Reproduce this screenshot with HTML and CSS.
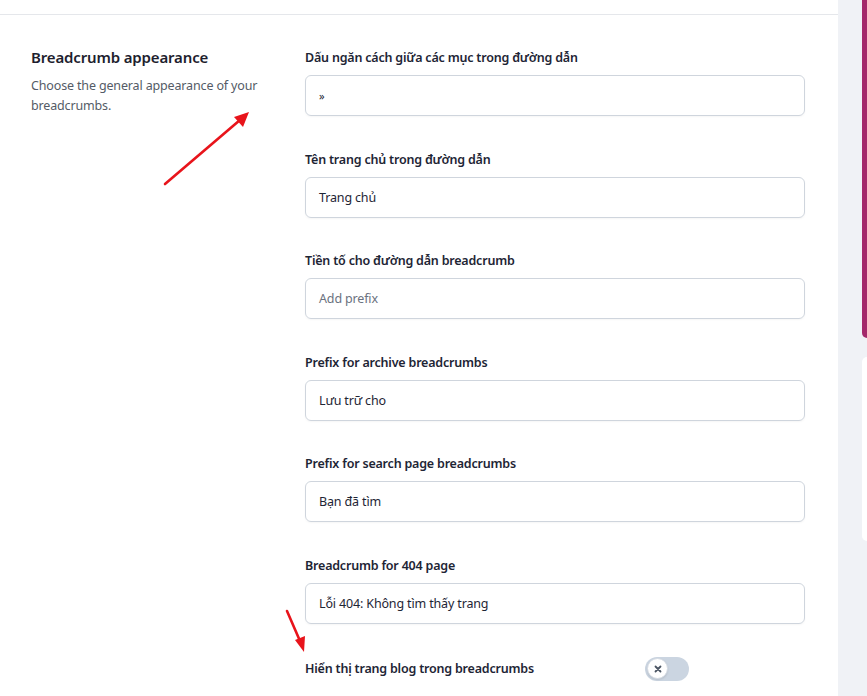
FILE: index.html
```html
<!DOCTYPE html>
<html lang="vi">
<head>
<meta charset="utf-8">
<title>Breadcrumb appearance</title>
<link rel="stylesheet" href="styles.css">
</head>
<body>
<div class="page">
  <main class="main">
    <div class="topbar"></div>
    <section class="section">
      <div class="intro">
        <h2 class="title">Breadcrumb appearance</h2>
        <p class="desc">Choose the general appearance of your breadcrumbs.</p>
      </div>
      <div class="fields">
        <div class="field">
          <label class="label">Dấu ngăn cách giữa các mục trong đường dẫn</label>
          <div class="input small">»</div>
        </div>
        <div class="field">
          <label class="label">Tên trang chủ trong đường dẫn</label>
          <div class="input">Trang chủ</div>
        </div>
        <div class="field">
          <label class="label">Tiền tố cho đường dẫn breadcrumb</label>
          <div class="input placeholder">Add prefix</div>
        </div>
        <div class="field">
          <label class="label">Prefix for archive breadcrumbs</label>
          <div class="input">Lưu trữ cho</div>
        </div>
        <div class="field">
          <label class="label">Prefix for search page breadcrumbs</label>
          <div class="input">Bạn đã tìm</div>
        </div>
        <div class="field">
          <label class="label">Breadcrumb for 404 page</label>
          <div class="input">Lỗi 404: Không tìm thấy trang</div>
        </div>
        <div class="toggle-row">
          <span class="label">Hiển thị trang blog trong breadcrumbs</span>
          <span class="toggle"><span class="knob">
            <svg width="10" height="10" viewBox="0 0 10 10"><path d="M2.5 2.5 L7.5 7.5 M7.5 2.5 L2.5 7.5" stroke="#4b5563" stroke-width="1.8" stroke-linecap="round"/></svg>
          </span></span>
        </div>
      </div>
    </section>
    <svg class="arrow arrow-1" width="100" height="90" viewBox="0 0 100 90">
      <line x1="5" y1="80" x2="80" y2="16" stroke="#e8141b" stroke-width="2.6" stroke-linecap="round"/>
      <polygon points="89,8 74,13 83,23" fill="#e8141b"/>
    </svg>
    <svg class="arrow arrow-2" width="40" height="50" viewBox="0 0 40 50">
      <line x1="6" y1="4" x2="19" y2="34" stroke="#e8141b" stroke-width="2.6" stroke-linecap="round"/>
      <polygon points="23,45 14,33 24,29" fill="#e8141b"/>
    </svg>
  </main>
  <aside class="aside">
    <div class="promo"></div>
    <div class="card"></div>
  </aside>
</div>
</body>
</html>
```

FILE: styles.css
```css
* { box-sizing: border-box; }
html, body { margin: 0; padding: 0; }
body {
  font-family: "Noto Sans", "Open Sans", sans-serif;
  color: #1e293b;
  background: #f0f2f6;
  overflow: hidden;
}
.page {
  display: flex;
  width: 867px;
  height: 696px;
}
.main {
  position: relative;
  width: 838px;
  flex: none;
  background: #fff;
}
.topbar {
  height: 15px;
  border-bottom: 1px solid #e5e7eb;
}
.section {
  display: grid;
  grid-template-columns: 274px 500px;
  padding: 32px 0 0 31px;
}
.title {
  margin: 0;
  font-size: 15px;
  font-weight: 600;
  line-height: 21px;
  letter-spacing: -0.15px;
  color: #1e1e2e;
}
.desc {
  margin: 8px 0 0;
  width: 236px;
  font-size: 12.5px;
  letter-spacing: -0.15px;
  line-height: 20px;
  color: #545b66;
}
.fields {
  display: flex;
  flex-direction: column;
  gap: 32.6px;
}
.field {
  display: flex;
  flex-direction: column;
  gap: 6px;
}
.label {
  font-size: 12.5px;
  font-weight: 600;
  line-height: 22px;
  letter-spacing: -0.2px;
  color: #1e2535;
}
.input {
  height: 41px;
  border: 1px solid #cfd5dd;
  border-radius: 6px;
  padding: 0 13px;
  display: flex;
  align-items: center;
  font-size: 12.5px;
  letter-spacing: -0.15px;
  color: #1e2535;
  box-shadow: 0 1px 2px rgba(0,0,0,0.04);
}
.input.small { font-size: 11px; }
.input.placeholder { color: #6b7280; }
.toggle-row {
  width: 384px;
  display: flex;
  align-items: center;
  justify-content: space-between;
}
.toggle {
  width: 44px;
  height: 24px;
  border-radius: 12px;
  background: #cbd5e1;
  display: flex;
  align-items: center;
  padding: 2px;
}
.knob {
  width: 21px;
  height: 21px;
  border-radius: 50%;
  background: #fff;
  border: 1px solid #d5dbe3;
  display: flex;
  align-items: center;
  justify-content: center;
  box-shadow: 0 1px 2px rgba(0,0,0,0.1);
}
.arrow { position: absolute; }
.arrow-1 { left: 160px; top: 104px; }
.arrow-2 { left: 281px; top: 607px; }
.aside {
  flex: 1;
  padding-left: 24px;
  display: flex;
  flex-direction: column;
  gap: 19px;
}
.promo {
  height: 338px;
  background: #a4286a;
  border-radius: 0 0 0 8px;
}
.card {
  height: 184px;
  background: #fff;
  border-radius: 8px 0 0 8px;
}
```
